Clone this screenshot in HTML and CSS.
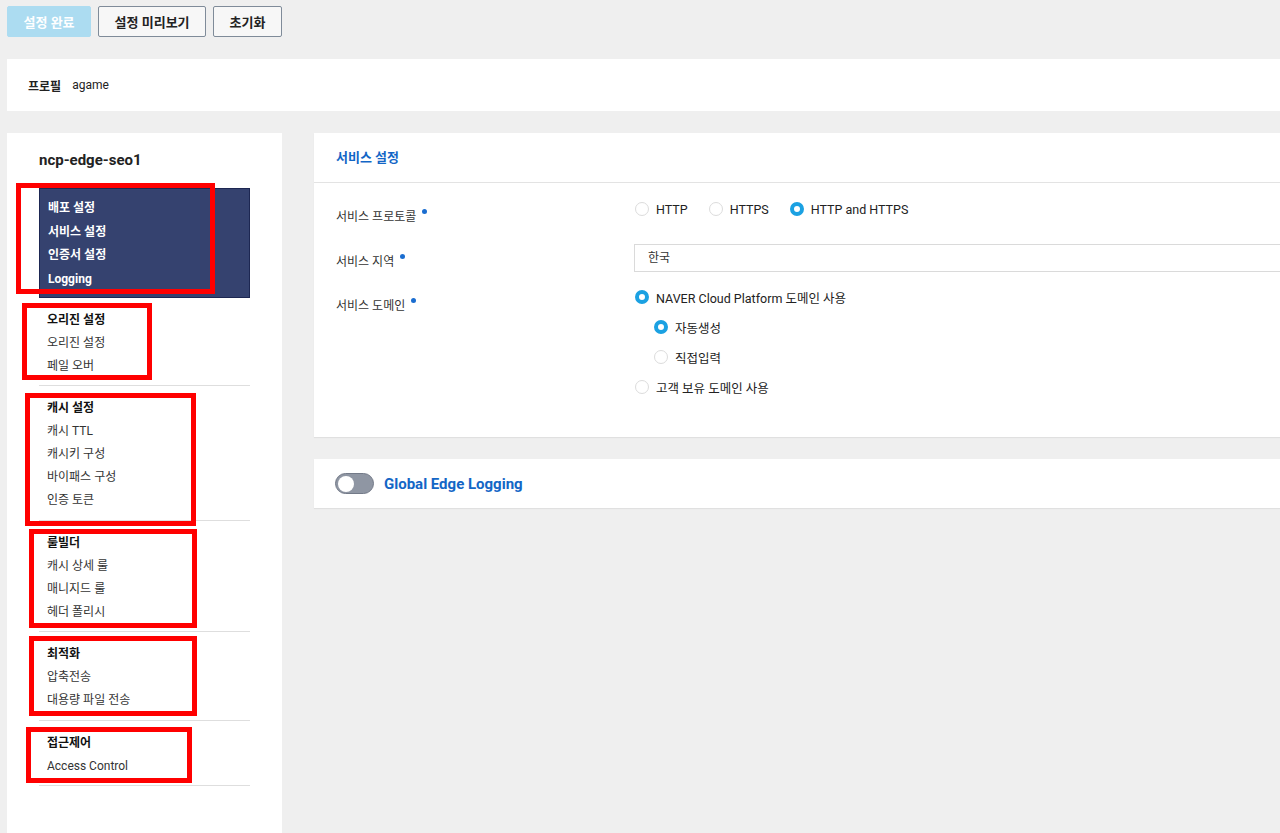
FILE: index.html
```html
<!DOCTYPE html>
<html lang="ko">
<head>
    <meta charset="UTF-8">
    <meta name="viewport" content="width=device-width, initial-scale=1.0">
    <title>CDN 설정</title>
    <link rel="stylesheet" href="styles.css">
</head>
<body>
    <div class="toolbar">
        <button class="btn btn-primary">설정 완료</button>
        <button class="btn">설정 미리보기</button>
        <button class="btn">초기화</button>
    </div>

    <div class="profile">
        <span class="profile-label">프로필</span>
        <span>agame</span>
    </div>

    <div class="layout">
        <aside class="sidebar">
            <div class="sidebar-title">ncp-edge-seo1</div>
            <ul class="nav nav-current">
                <li>배포 설정</li>
                <li>서비스 설정</li>
                <li>인증서 설정</li>
                <li>Logging</li>
            </ul>
            <ul class="nav">
                <li class="nav-head">오리진 설정</li>
                <li>오리진 설정</li>
                <li>페일 오버</li>
            </ul>
            <ul class="nav">
                <li class="nav-head">캐시 설정</li>
                <li>캐시 TTL</li>
                <li>캐시키 구성</li>
                <li>바이패스 구성</li>
                <li>인증 토큰</li>
            </ul>
            <ul class="nav">
                <li class="nav-head">룰빌더</li>
                <li>캐시 상세 룰</li>
                <li>매니지드 룰</li>
                <li>헤더 폴리시</li>
            </ul>
            <ul class="nav">
                <li class="nav-head">최적화</li>
                <li>압축전송</li>
                <li>대용량 파일 전송</li>
            </ul>
            <ul class="nav">
                <li class="nav-head">접근제어</li>
                <li>Access Control</li>
            </ul>
        </aside>

        <main class="main">
            <section class="card">
                <h2 class="card-title">서비스 설정</h2>
                <div class="form">
                    <div class="form-row row-protocol">
                        <div class="form-label">서비스 프로토콜<i class="req"></i></div>
                        <div class="radio-group inline">
                            <label class="radio"><span class="radio-dot"></span>HTTP</label>
                            <label class="radio"><span class="radio-dot"></span>HTTPS</label>
                            <label class="radio"><span class="radio-dot checked"></span>HTTP and HTTPS</label>
                        </div>
                    </div>
                    <div class="form-row row-region">
                        <div class="form-label">서비스 지역<i class="req"></i></div>
                        <div class="select">한국</div>
                    </div>
                    <div class="form-row row-domain">
                        <div class="form-label">서비스 도메인<i class="req"></i></div>
                        <div class="radio-group">
                            <label class="radio"><span class="radio-dot checked"></span>NAVER Cloud Platform 도메인 사용</label>
                            <label class="radio sub"><span class="radio-dot checked"></span>자동생성</label>
                            <label class="radio sub"><span class="radio-dot"></span>직접입력</label>
                            <label class="radio"><span class="radio-dot"></span>고객 보유 도메인 사용</label>
                        </div>
                    </div>
                </div>
            </section>

            <section class="card card-toggle">
                <span class="toggle"><span class="toggle-knob"></span></span>
                <span class="toggle-title">Global Edge Logging</span>
            </section>
        </main>
    </div>

    <!-- red annotation boxes drawn over the menu -->
    <div class="mark mark-1"></div>
    <div class="mark mark-2"></div>
    <div class="mark mark-3"></div>
    <div class="mark mark-4"></div>
    <div class="mark mark-5"></div>
    <div class="mark mark-6"></div>
</body>
</html>
```

FILE: styles.css
```css
html, body {
    overflow: hidden;
}

body {
    margin: 0;
    background: #efefef;
    font-family: Roboto, "Noto Sans CJK KR", sans-serif;
    font-size: 12px;
    color: #222;
}

ul {
    list-style: none;
    margin: 0;
    padding: 0;
}

/* top buttons */
.toolbar {
    display: flex;
    gap: 7px;
    padding: 6px 7px 0;
}

.btn {
    height: 31px;
    padding: 0 15.5px;
    font-family: inherit;
    font-size: 13px;
    font-weight: bold;
    color: #222;
    background: #f7f7f7;
    border: 1px solid #7f8b99;
    border-radius: 2px;
}

.btn-primary {
    color: #fff;
    background: #acdcf1;
    border-color: #acdcf1;
}

.profile {
    display: flex;
    align-items: center;
    gap: 11px;
    height: 52px;
    margin: 22px 0 0 7px;
    padding-left: 21px;
    background: #fff;
}

.profile-label {
    font-weight: bold;
}

.layout {
    display: flex;
    gap: 32px;
    margin: 22px -40px 0 7px;
}

/* left menu */
.sidebar {
    flex: 0 0 275px;
    min-height: 740px;
    padding: 0 32px;
    box-sizing: border-box;
    background: #fff;
}

.sidebar-title {
    padding-top: 18px;
    margin-bottom: 19px;
    line-height: 18px;
    font-size: 15px;
    font-weight: bold;
}

.nav {
    padding: 11px 8px 7.4px;
    border-bottom: 1px solid #dedede;
    color: #333;
}

.nav li {
    line-height: 23px;
}

.nav-head {
    font-weight: bold;
    color: #111;
}

.nav-current {
    padding: 8px 8px 6px;
    background: #35426f;
    border: 1px solid #1d2752;
    color: #fff;
    font-weight: bold;
}

.nav-current li {
    line-height: 23.5px;
}

/* right content */
.main {
    flex: 1;
}

.card {
    background: #fff;
    box-shadow: 0 1px 1px rgba(0, 0, 0, 0.06);
}

.card-title {
    margin: 0;
    padding: 16px 22px 15px;
    line-height: 18px;
    font-size: 13px;
    color: #1366c6;
    border-bottom: 1px solid #e3e3e3;
}

.form {
    padding: 16px 0 40px 22px;
}

.form-row {
    display: grid;
    grid-template-columns: 298px 1fr;
    align-items: start;
}

.row-region {
    margin-top: 25px;
}

.row-domain {
    margin-top: 15px;
}

.form-label {
    padding-top: 9px;
    margin-bottom: -7px;
    line-height: 18px;
    color: #333;
}

.row-domain .form-label {
    padding-top: 10px;
}

.req {
    display: inline-block;
    width: 5px;
    height: 5px;
    margin-left: 6px;
    border-radius: 50%;
    background: #1a6dd0;
    vertical-align: 7px;
}

.radio-group {
    display: flex;
    flex-direction: column;
    gap: 10px;
}

.radio-group.inline {
    flex-direction: row;
    gap: 20px;
}

.radio {
    display: flex;
    align-items: center;
    gap: 7px;
    height: 20px;
    font-size: 12.5px;
    color: #222;
}

.radio.sub {
    padding-left: 19px;
}

.radio-dot {
    width: 14px;
    height: 14px;
    margin-left: 1px;
    box-sizing: border-box;
    border: 1px solid #dcdcdc;
    border-radius: 50%;
    background: #fff;
}

.radio-dot.checked {
    border: 4px solid #1ba1e2;
}

.select {
    height: 28px;
    padding-left: 13px;
    line-height: 26px;
    box-sizing: border-box;
    border: 1px solid #dadada;
    color: #333;
}

.card-toggle {
    display: flex;
    align-items: center;
    gap: 10px;
    height: 49px;
    margin-top: 22px;
    padding-left: 21px;
}

.toggle {
    display: flex;
    align-items: center;
    width: 39px;
    height: 21px;
    padding: 0 2px;
    box-sizing: border-box;
    border: 1px solid #737a88;
    border-radius: 11px;
    background: #8f96a3;
}

.toggle-knob {
    width: 16px;
    height: 16px;
    border-radius: 50%;
    background: #fff;
}

.toggle-title {
    font-size: 15px;
    font-weight: bold;
    color: #1366c6;
}

/* annotation marks */
.mark {
    position: absolute;
    box-sizing: border-box;
    border: 5px solid #f00;
}

.mark-1 { left: 16px; top: 183px; width: 199px; height: 111px; }
.mark-2 { left: 22px; top: 303px; width: 130px; height: 77px; }
.mark-3 { left: 25px; top: 393px; width: 171px; height: 133px; }
.mark-4 { left: 29px; top: 529px; width: 168px; height: 99px; }
.mark-5 { left: 29px; top: 636px; width: 168px; height: 80px; }
.mark-6 { left: 26px; top: 727px; width: 166px; height: 56px; }
```
